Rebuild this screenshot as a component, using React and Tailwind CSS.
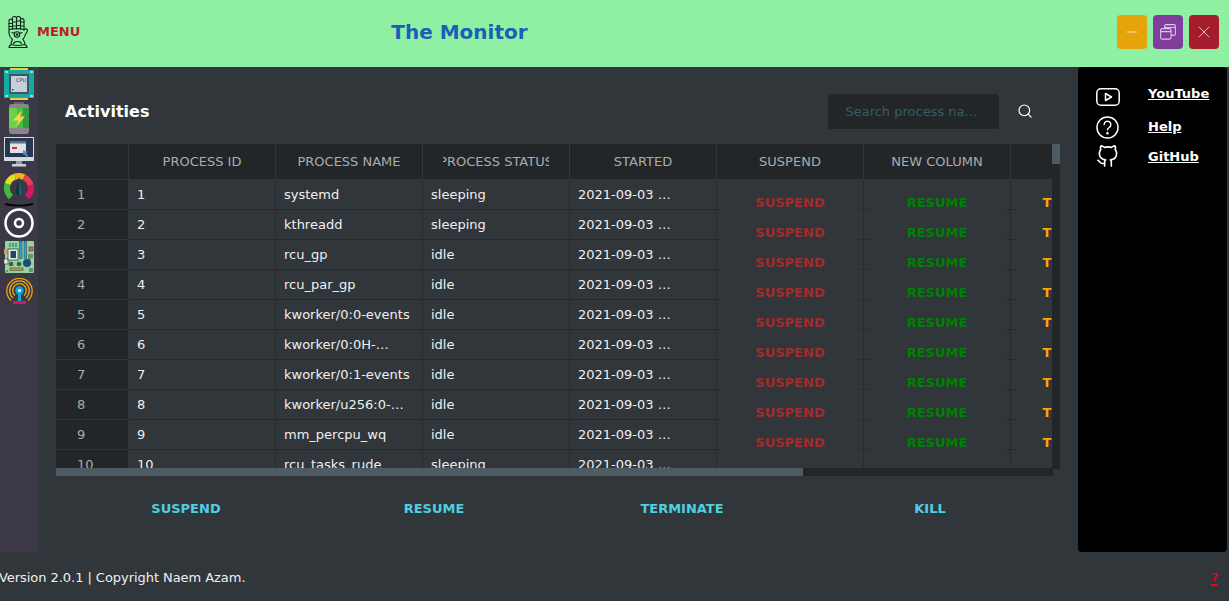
import { Search, X, Minus } from "lucide-react";

const processes = [
  ["1", "systemd", "sleeping"],
  ["2", "kthreadd", "sleeping"],
  ["3", "rcu_gp", "idle"],
  ["4", "rcu_par_gp", "idle"],
  ["5", "kworker/0:0-events", "idle"],
  ["6", "kworker/0:0H-…", "idle"],
  ["7", "kworker/0:1-events", "idle"],
  ["8", "kworker/u256:0-…", "idle"],
  ["9", "mm_percpu_wq", "idle"],
  ["10", "rcu_tasks_rude_", "sleeping"],
];

const columns = ["PROCESS ID", "PROCESS NAME", "PROCESS STATUS", "STARTED", "SUSPEND", "NEW COLUMN", ""];

function Gauntlet() {
  return (
    <svg width="20" height="32" viewBox="0 0 20 32" fill="none" stroke="#14261c" strokeWidth="1.100" strokeLinejoin="round" strokeLinecap="round">
      {/* fingers */}
      <path d="M1 16V4.500c0-1.800 3.500-1.800 3.500 0V2c0-2 4-2 4 0 0-2 4-2 4 0v2c0-1.800 3.500-1.800 3.500 0v10" />
      <path d="M4.500 4.500V13M8.500 2V13M12.500 2V13" />
      <path d="M1 7.500h3.500M4.500 6h4M8.500 5h4M12.500 6H16M1 10.500h3.500M4.500 10h4M8.500 9.500h4M12.500 10H16" />
      <path d="M1.500 13.500c4-1 10-1 14.500 0" />
      {/* thumb */}
      <path d="M16 14c1-1.500 3.500-1.500 3.500.3 0 2.200-2 3-2.500 5.200-.3 1.300-1 2.500-2 3.500" />
      {/* palm */}
      <path d="M1 16c0 3 1 5.500 3.500 7.500" />
      <circle cx="9" cy="18.500" r="2.700" />
      <circle cx="9" cy="18.500" r="0.800" />
      <path d="M4 16.500l2.500 1M14 16.500l-2.500 1" />
      {/* cuff */}
      <path d="M4.500 23.500L3 27l.7 1.500C2 29 1 30 1 31.500h18c0-1.500-1-2.500-2.700-3L17 27l-2-3.500" />
      <path d="M5.500 27.500c1-2.600 7-2.600 8 0M3.700 28.500c4 1.300 8.600 1.300 12.600 0" />
    </svg>
  );
}

function CpuIcon() {
  return (
    <svg width="30" height="32" viewBox="0 0 30 32">
      <rect x="6" y="0" width="18" height="2" fill="#f6c453" />
      <rect x="6" y="30" width="18" height="2" fill="#f6c453" />
      <rect x="0" y="2" width="30" height="28" fill="#12ad9f" />
      <path d="M1 4h3M1 28h3M26 4h3M26 28h3" stroke="#b9f2ea" strokeWidth="1.500" />
      <rect x="5" y="6" width="20" height="20" fill="#46506b" />
      <rect x="7" y="8" width="16" height="16" fill="#c4d1da" />
      <text x="12" y="13.500" fontSize="5" fontFamily="DejaVu Sans" fill="#30394a">CPU</text>
      <rect x="8" y="21" width="1.500" height="1.500" fill="#30394a" />
    </svg>
  );
}

function BatteryIcon() {
  return (
    <svg width="20" height="32" viewBox="0 0 20 32">
      <rect x="5" y="0" width="10" height="3" rx="1" fill="#6b6570" />
      <rect x="0" y="2" width="20" height="30" rx="3" fill="#8b8590" />
      <rect x="0" y="6" width="20" height="20" fill="#6ad14a" />
      <rect x="8" y="6" width="6" height="20" fill="#4cbb45" />
      <rect x="14" y="6" width="6" height="20" fill="#2f9d3e" />
      <path d="M13 8L4 18.500h5L7 25l9-10.500h-5z" fill="#f7d348" />
    </svg>
  );
}

function MonitorIcon() {
  return (
    <svg width="30" height="30" viewBox="0 0 30 30">
      <rect x="0" y="0" width="30" height="24" fill="#d3dbe2" />
      <rect x="1" y="1" width="28" height="19" fill="#27384e" />
      <rect x="6" y="4" width="16" height="12" fill="#dde3ea" />
      <rect x="6" y="4" width="16" height="2.500" fill="#5d6f8a" />
      <rect x="8" y="10" width="5" height="2" fill="#d8342f" />
      <path d="M19 13l5 2-2 1 2 3-1 1-3-3-1 1z" fill="#6f86c9" />
      <rect x="12" y="24" width="6" height="3" fill="#8f99a4" />
      <rect x="8" y="27" width="14" height="2.500" fill="#c8d0d8" />
    </svg>
  );
}

function GaugeIcon() {
  return (
    <svg width="30" height="34" viewBox="0 0 30 34" fill="none">
      <path d="M7 24A12 12 0 0 1 3.600 11" stroke="#3dbb3a" strokeWidth="6" />
      <path d="M3.600 11A12 12 0 0 1 11 3.700" stroke="#e6dc28" strokeWidth="6" />
      <path d="M11 3.700A12 12 0 0 1 20 4.100" stroke="#f5b323" strokeWidth="6" />
      <path d="M20 4.100A12 12 0 0 1 26.500 12" stroke="#e8414f" strokeWidth="6" />
      <path d="M26.500 12A12 12 0 0 1 23 24" stroke="#d3195f" strokeWidth="6" />
      <path d="M15 4l3.500 15a3.500 3.500 0 0 1-7 0z" fill="#12323f" />
      <path d="M15 4l3.500 15a3.500 3.500 0 0 1-3.500 3.500z" fill="#1c5a6e" />
      <path d="M1 31c8 2 20 2 28 0" stroke="#050505" strokeWidth="2" />
    </svg>
  );
}

function DiscIcon() {
  return (
    <svg width="30" height="30" viewBox="0 0 30 30" fill="none" stroke="#ffffff">
      <circle cx="15" cy="15" r="13.500" strokeWidth="2.500" />
      <circle cx="15" cy="15" r="4" strokeWidth="2.500" />
    </svg>
  );
}

function BoardIcon() {
  return (
    <svg width="30" height="32" viewBox="0 0 30 32">
      <rect x="1" y="0" width="29" height="32" rx="1" fill="#8fd6a0" />
      <rect x="0" y="8" width="3" height="5" fill="#c9a35c" />
      <rect x="0" y="18" width="4" height="5" fill="#e8ece4" stroke="#26343a" strokeWidth="0.600" />
      <rect x="15.500" y="0.500" width="2.500" height="17" fill="#3b9fd8" stroke="#26343a" strokeWidth="0.500" />
      <rect x="20" y="0.500" width="2.500" height="17" fill="#3b9fd8" stroke="#26343a" strokeWidth="0.500" />
      <rect x="25" y="6" width="4" height="4" fill="#e05c63" stroke="#26343a" strokeWidth="0.500" />
      <rect x="4" y="8" width="10" height="11" fill="#e8ece4" stroke="#26343a" strokeWidth="0.700" />
      <rect x="6.500" y="10" width="5.500" height="7" fill="#27406c" />
      <circle cx="7" cy="23" r="2" fill="#7a4a3a" stroke="#26343a" strokeWidth="0.500" />
      <circle cx="15" cy="23" r="2" fill="#4c5a54" stroke="#26343a" strokeWidth="0.500" />
      <circle cx="23" cy="22" r="3.800" fill="#1d4a7f" stroke="#26343a" strokeWidth="0.500" />
      <rect x="6" y="27" width="13" height="2.500" fill="#c69a3f" stroke="#26343a" strokeWidth="0.500" />
      <path d="M24 14h5M24 16h5M24 18h3M5 3h2M8 3h2M11 3h2M5 5h2M8 5h2M11 5h2" stroke="#2f5d45" strokeWidth="1" />
      <path d="M25 28h4M25 30h4M2 30h2" stroke="#2f5d45" strokeWidth="1" />
    </svg>
  );
}

function AntennaIcon() {
  return (
    <svg width="27" height="27" viewBox="0 0 27 27" fill="none">
      <path d="M5 22.500A12.700 12.700 0 1 1 22 22.500" stroke="#e8a50d" strokeWidth="1.300" />
      <path d="M7 20A9.800 9.800 0 1 1 20 20" stroke="#e8a50d" strokeWidth="1.300" />
      <path d="M9 17.500A6.800 6.800 0 1 1 18 17.500" stroke="#e8a50d" strokeWidth="1.300" />
      <circle cx="13.500" cy="12.500" r="4.200" fill="#12a5d6" />
      <circle cx="13.500" cy="12.500" r="1.600" fill="#e6f6fb" />
      <rect x="12" y="16" width="3" height="8" fill="#12a5d6" />
      <rect x="7" y="23" width="13" height="3" fill="#d3195f" />
    </svg>
  );
}

function HeaderCell({ label }) {
  return (
    <div className="w-[147px] shrink-0 h-[36px] border-r border-b border-[#31363b] px-[20px] flex items-center bg-[#232629]">
      <div className="w-full flex justify-center overflow-hidden whitespace-nowrap text-[13px] text-[#a9acae]">{label}</div>
    </div>
  );
}

function TextCell({ text }) {
  return (
    <div className="w-[147px] shrink-0 h-[30px] border-r border-b border-[#272b2f] pl-[8px] flex items-center whitespace-nowrap overflow-hidden text-[13px] text-[#eff0f1]">
      {text}
    </div>
  );
}

function ButtonCell({ text, color }) {
  return (
    <div className="w-[147px] shrink-0 h-[30px] border-r border-b border-[#272b2f]">
      <div className={`ml-[5px] mt-[8px] w-[136px] h-[30px] bg-[#31363b] flex items-center justify-center font-bold text-[13px] ${color}`}>
        {text}
      </div>
    </div>
  );
}

function LinkRow({ icon, label, className }) {
  return (
    <div className={`flex ${className}`}>
      <div className="w-[52px] flex">{icon}</div>
      <a href="#" className="font-bold text-[13px] underline text-white">{label}</a>
    </div>
  );
}

export default function App() {
  return (
    <div className="w-[1229px] h-[601px] overflow-hidden flex flex-col bg-[#31363b] font-['DejaVu_Sans',sans-serif]">
      {/* top bar */}
      <div className="h-[67px] shrink-0 bg-[#8ff0a4] flex items-center pb-[3px]">
        <div className="ml-[8px] w-[29px] flex">
          <Gauntlet />
        </div>
        <span className="font-bold text-[13px] text-[#c01c28]">MENU</span>
        <span className="ml-[311px] font-bold text-[20px] text-[#1a5fb4]">The Monitor</span>
        <div className="ml-auto mr-[10px] flex gap-[6px]">
          <button className="w-[30px] h-[34px] rounded-[4px] bg-[#e5a50a] flex items-center justify-center">
            <Minus size={16} strokeWidth={1.5} color="#f3dfa8" />
          </button>
          <button className="w-[30px] h-[34px] rounded-[4px] bg-[#813d9c] flex items-center justify-center">
            <svg width="16" height="16" viewBox="0 0 16 16" fill="none" stroke="#dcc5e6" strokeWidth="1.100">
              <rect x="0.600" y="4.600" width="10.500" height="10.500" rx="1.500" />
              <path d="M.6 7.600h10.500M4.600 4.500V2.200c0-.9.600-1.600 1.500-1.600h7.700c.9 0 1.600.7 1.600 1.600v7.700c0 .9-.7 1.500-1.600 1.500h-2.700M4.600 3.500h10.500" />
            </svg>
          </button>
          <button className="w-[30px] h-[34px] rounded-[4px] bg-[#a51d2d] flex items-center justify-center">
            <X size={20} strokeWidth={1.1} color="#edc7cb" />
          </button>
        </div>
      </div>

      <div className="h-[485px] shrink-0 flex">
        {/* icon rail */}
        <div className="w-[38px] shrink-0 rounded-br-[4px] bg-[#3d3846] flex flex-col items-center">
          <div className="mt-[1px] flex"><CpuIcon /></div>
          <div className="mt-[2px] flex"><BatteryIcon /></div>
          <div className="mt-[3px] flex"><MonitorIcon /></div>
          <div className="mt-[6px] flex"><GaugeIcon /></div>
          <div className="mt-[1px] flex"><DiscIcon /></div>
          <div className="mt-[3px] flex"><BoardIcon /></div>
          <div className="mt-[5px] flex"><AntennaIcon /></div>
        </div>

        {/* activities */}
        <div className="w-[1040px] shrink-0 flex flex-col">
          <div className="h-[77px] shrink-0 flex">
            <h1 className="ml-[27px] mt-[33px] font-bold text-[16px] leading-[24px] text-white">Activities</h1>
            <div className="ml-[679px] mt-[27px] w-[171px] h-[35px] rounded-t-[4px] bg-[#232629] pl-[17px] flex items-center text-[13px] text-[#2f5f68]">
              Search process na…
            </div>
            <div className="ml-[18px] mt-[36px] flex">
              <Search size={16} strokeWidth={1.8} color="#ffffff" />
            </div>
          </div>

          <div className="ml-[18px] flex">
            <div className="w-[996px] h-[324px] overflow-hidden">
              <div className="flex w-[1100px]">
                <div className="w-[73px] shrink-0 h-[36px] border-r border-b border-[#31363b] bg-[#232629]" />
                {columns.map((c, i) => (
                  <HeaderCell key={i} label={c} />
                ))}
              </div>
              {processes.map(([id, name, status]) => (
                <div key={id} className="flex w-[1100px]">
                  <div className="w-[73px] shrink-0 h-[30px] border-r border-b border-[#31363b] bg-[#232629] pl-[21px] flex items-center text-[13px] text-[#a9acae]">
                    {id}
                  </div>
                  <TextCell text={id} />
                  <TextCell text={name} />
                  <TextCell text={status} />
                  <TextCell text="2021-09-03 …" />
                  <ButtonCell text="SUSPEND" color="text-[#a52a2a]" />
                  <ButtonCell text="RESUME" color="text-[#008000]" />
                  <ButtonCell text="TERMINATE" color="text-[#ffa500]" />
                </div>
              ))}
            </div>
            <div className="w-[8px] h-[325px] bg-[#232629]">
              <div className="h-[20px] bg-[#4f5b62]" />
            </div>
          </div>
          <div className="ml-[18px] w-[997px] h-[8px] -mt-[1px] bg-[#232629]">
            <div className="w-[747px] h-full bg-[#4f5b62]" />
          </div>

          <div className="ml-[24px] mt-[1px] flex">
            {["SUSPEND", "RESUME", "TERMINATE", "KILL"].map((b) => (
              <button key={b} className="w-[248px] h-[63px] font-bold text-[13px] text-[#4dd0e1]">
                {b}
              </button>
            ))}
          </div>
        </div>

        {/* help panel */}
        <div className="w-[149px] shrink-0 bg-black rounded-[4px] pt-[17px] pl-[18px] flex flex-col">
          <LinkRow
            className="h-[30px]"
            label="YouTube"
            icon={
              <svg width="24" height="18" viewBox="0 0 24 18" fill="none" stroke="#ffffff" strokeWidth="1.500" strokeLinejoin="round" className="mt-[4px]">
                <rect x="0.800" y="0.800" width="22.400" height="16.400" rx="4" />
                <path d="M9.500 5.500v7l6-3.500z" />
              </svg>
            }
          />
          <LinkRow
            className="h-[30px] mt-[3px]"
            label="Help"
            icon={
              <svg width="23" height="23" viewBox="0 0 24 24" fill="none" stroke="#ffffff" strokeWidth="1.500" strokeLinecap="round" className="-mt-[1px]">
                <circle cx="12" cy="12" r="11" />
                <path d="M8.500 9a3.500 3.500 0 1 1 5.300 3c-1.200.7-1.800 1.300-1.800 2.500" />
                <circle cx="12" cy="18" r="0.600" fill="#ffffff" />
              </svg>
            }
          />
          <LinkRow
            className="h-[30px]"
            label="GitHub"
            icon={
              <svg width="23" height="23" viewBox="0 0 24 24" fill="none" stroke="#ffffff" strokeWidth="1.700" strokeLinecap="round" strokeLinejoin="round" className="-mt-[2px]">
                <path d="M9 19c-5 1.500-5-2.500-7-3m14 6v-3.870a3.370 3.370 0 0 0-.94-2.610c3.140-.35 6.440-1.540 6.440-7A5.440 5.440 0 0 0 20 4.770 5.070 5.070 0 0 0 19.910 1S18.730.65 16 2.480a13.380 13.380 0 0 0-7 0C6.270.65 5.090 1 5.090 1A5.070 5.070 0 0 0 5 4.770a5.440 5.440 0 0 0-1.500 3.780c0 5.420 3.300 6.610 6.440 7A3.370 3.370 0 0 0 9 18.130V22" />
              </svg>
            }
          />
        </div>
      </div>

      {/* footer */}
      <div className="flex-1 flex items-center justify-between pt-[2px] pr-[11px] pl-0 text-[13px]">
        <span className="-ml-[1px] tracking-[-0.05px] text-[#eff0f1]">Version 2.0.1 | Copyright Naem Azam.</span>
        <a href="#" className="font-medium underline decoration-[1.5px] underline-offset-[2px] text-[#ff0000]">?</a>
      </div>
    </div>
  );
}
